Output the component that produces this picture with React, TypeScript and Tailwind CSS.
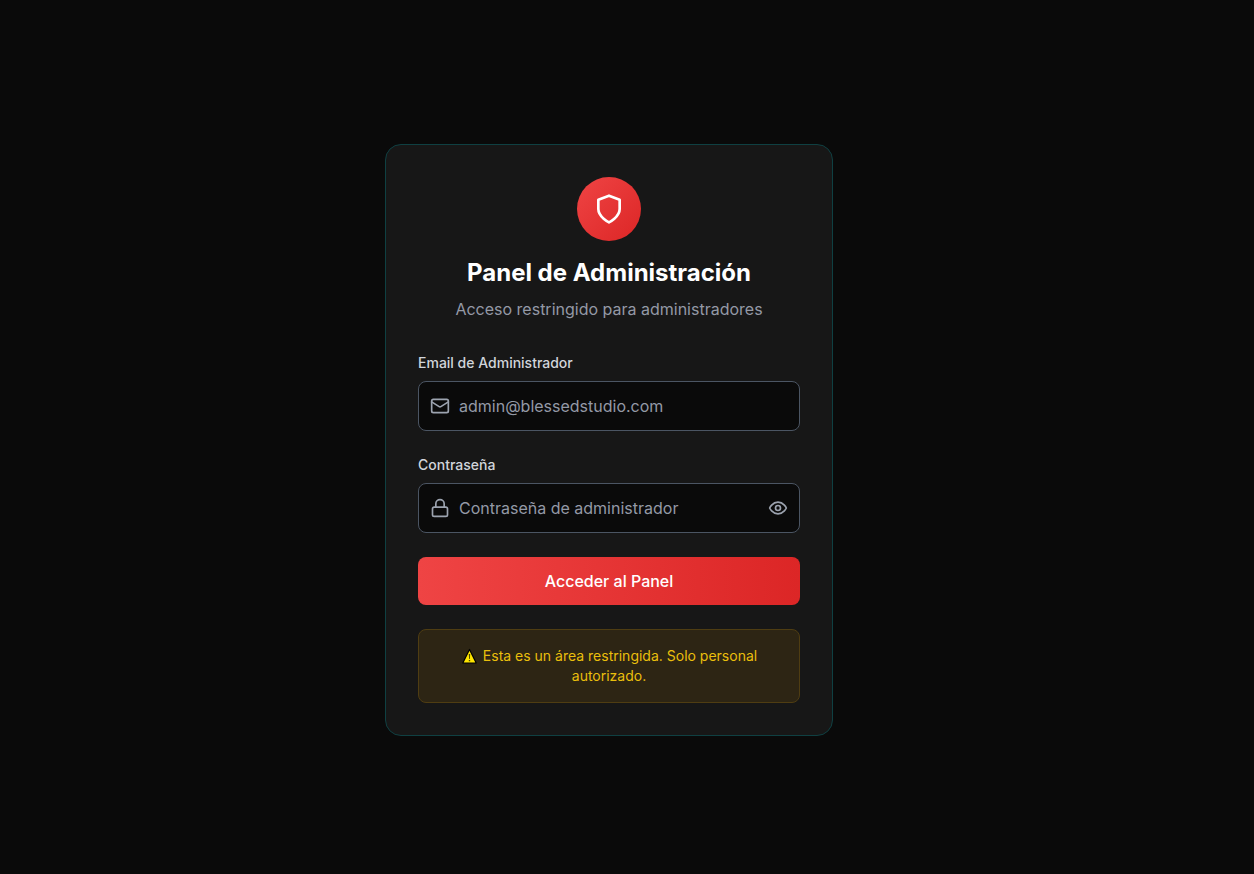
import { useState } from 'react';
import type { ReactNode } from 'react';

function Icon({ className, children }: { className: string; children: ReactNode }) {
  return (
    <svg
      className={className}
      viewBox="0 0 24 24"
      fill="none"
      stroke="currentColor"
      strokeWidth="2"
      strokeLinecap="round"
      strokeLinejoin="round"
      aria-hidden="true"
    >
      {children}
    </svg>
  );
}

const fieldClass =
  'block w-full rounded-lg border border-[#4b5563] bg-[#0a0a0a] py-3 pl-10 text-base text-white placeholder:text-[#9499a6] focus:border-red-500 focus:outline-none';

export default function App() {
  const [showPassword, setShowPassword] = useState(false);

  return (
    <main className="flex min-h-screen items-center justify-center bg-[#0a0a0a] pt-1.5 pr-9 font-['Inter',sans-serif]">
      <div className="w-full max-w-md rounded-2xl border border-[#0f4042] bg-[#171717] p-8">
        <header className="mb-8 text-center">
          <div className="mx-auto mb-4 flex size-16 items-center justify-center rounded-full bg-[linear-gradient(to_bottom_right,#ef4444,#dc2626)] text-white">
            <Icon className="size-8">
              <path d="M12 22s8-4 8-10V5l-8-3-8 3v7c0 6 8 10 8 10" />
            </Icon>
          </div>
          <h1 className="mb-2 text-2xl font-bold text-white">Panel de Administración</h1>
          <p className="text-base text-[#9499a6]">Acceso restringido para administradores</p>
        </header>

        <form className="flex flex-col gap-6" onSubmit={(event) => event.preventDefault()}>
          <div>
            <label htmlFor="email" className="mb-2 block text-sm font-medium text-[#d1d5db]">
              Email de Administrador
            </label>
            <div className="relative">
              <Icon className="absolute top-1/2 left-3 size-5 -translate-y-1/2 text-[#9ca3af]">
                <rect width="20" height="16" x="2" y="4" rx="2" />
                <path d="m22 7-8.97 5.7a1.94 1.94 0 0 1-2.06 0L2 7" />
              </Icon>
              <input id="email" type="email" placeholder="admin@blessedstudio.com" className={`${fieldClass} pr-4`} />
            </div>
          </div>

          <div>
            <label htmlFor="password" className="mb-2 block text-sm font-medium text-[#d1d5db]">
              Contraseña
            </label>
            <div className="relative">
              <Icon className="absolute top-1/2 left-3 size-5 -translate-y-1/2 text-[#9ca3af]">
                <rect width="18" height="11" x="3" y="11" rx="2" />
                <path d="M7 11V7a5 5 0 0 1 10 0v4" />
              </Icon>
              <input
                id="password"
                type={showPassword ? 'text' : 'password'}
                placeholder="Contraseña de administrador"
                className={`${fieldClass} pr-12`}
              />
              <button
                type="button"
                aria-label={showPassword ? 'Ocultar contraseña' : 'Mostrar contraseña'}
                onClick={() => setShowPassword(!showPassword)}
                className="absolute top-1/2 right-3 -translate-y-1/2 text-[#9ca3af] hover:text-white"
              >
                <Icon className="size-5">
                  <path d="M2 12s3-7 10-7 10 7 10 7-3 7-10 7-10-7-10-7Z" />
                  <circle cx="12" cy="12" r="3" />
                </Icon>
              </button>
            </div>
          </div>

          <button
            type="submit"
            className="w-full rounded-lg bg-[linear-gradient(to_right,#ef4444,#dc2626)] px-4 py-3 text-base font-medium text-white"
          >
            Acceder al Panel
          </button>
        </form>

        <div className="mt-6 rounded-lg border border-[#4f3d12] bg-[#2d2514] p-4">
          <p className="text-center text-sm text-[#eabf0c]">
            <svg className="mr-1.5 inline-block size-4 align-[-3px]" viewBox="0 0 16 16" aria-hidden="true">
              <path d="M8.5 1.5 15.2 15H1.8Z" fill="#ffe600" stroke="#000" strokeWidth="1.2" strokeLinejoin="round" />
              <path d="M7.8 6h1.4l-.3 5h-.8ZM7.8 12h1.4v1.3H7.8Z" fill="#4a4300" />
            </svg>
            Esta es un área restringida. Solo personal autorizado.
          </p>
        </div>
      </div>
    </main>
  );
}
